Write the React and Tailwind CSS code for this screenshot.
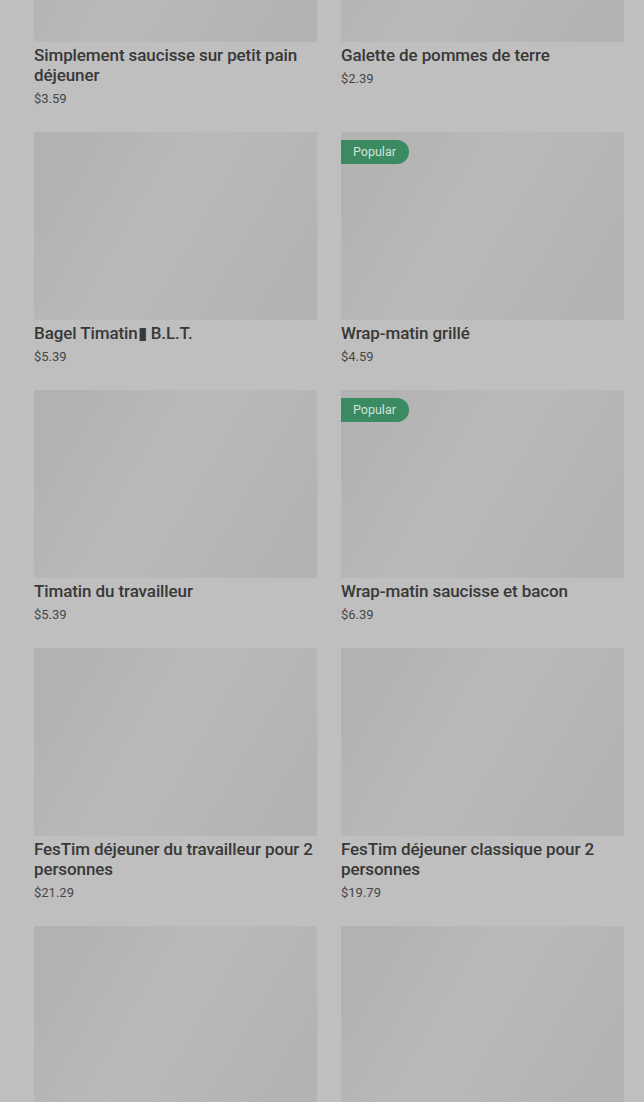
import React from "react";

const items = [
  { name: "Simplement saucisse sur petit pain déjeuner", price: "$3.59" },
  { name: "Galette de pommes de terre", price: "$2.39" },
  { name: "Bagel Timatin\u25AE B.L.T.", price: "$5.39" },
  { name: "Wrap-matin grillé", price: "$4.59", popular: true },
  { name: "Timatin du travailleur", price: "$5.39" },
  { name: "Wrap-matin saucisse et bacon", price: "$6.39", popular: true },
  { name: "FesTim déjeuner du travailleur pour 2 personnes", price: "$21.29" },
  { name: "FesTim déjeuner classique pour 2 personnes", price: "$19.79" },
  { name: "", price: "" },
  { name: "", price: "" },
];

function Card({ item }) {
  return (
    <div className="flex flex-col">
      <div className="relative h-[188px] w-full bg-[linear-gradient(120deg,#b2b2b2_10%,#bababa_45%,#b3b3b3_90%)]">
        {item.popular && (
          <span className="absolute left-0 top-2 flex h-6 items-center rounded-r-full bg-[#3b8a62] pl-3 pr-[13px] text-[12.5px] leading-none text-[#d3e3d9]">
            Popular
          </span>
        )}
      </div>
      {item.name && (
        <div className="mt-[3px] text-[17px] font-medium leading-5 tracking-[-0.1px] text-[#383838]">
          {item.name}
        </div>
      )}
      {item.price && (
        <div className="mt-1 text-[13px] leading-5 text-[#474747]">{item.price}</div>
      )}
    </div>
  );
}

export default function App() {
  return (
    <div
      className="h-[1102px] w-full overflow-hidden bg-[#bfbfbf]"
      style={{ fontFamily: "Roboto, 'Noto Sans', sans-serif" }}
    >
      <div className="-mt-[146px] grid grid-cols-2 gap-x-6 gap-y-[23px] pl-[34px] pr-5">
        {items.map((it, i) => (
          <Card key={i} item={it} />
        ))}
      </div>
    </div>
  );
}
